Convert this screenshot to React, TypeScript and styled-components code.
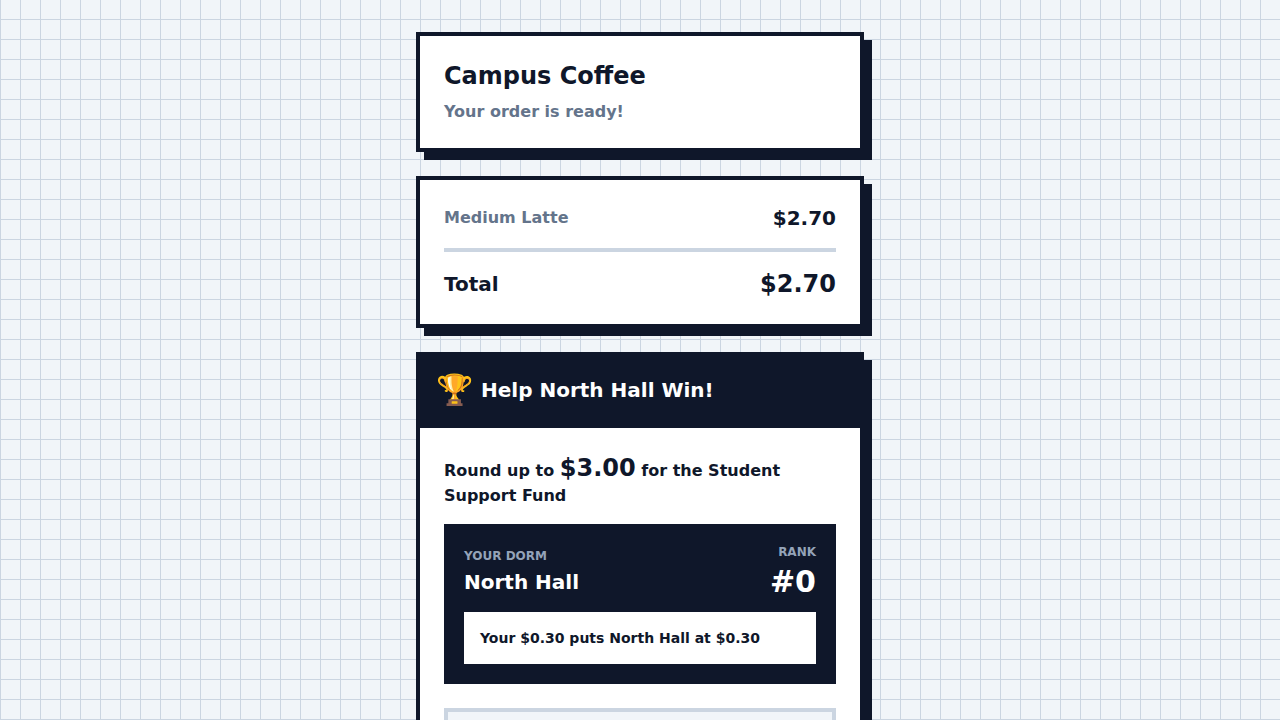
import React, { FC } from 'react'
import styled, { createGlobalStyle, css } from 'styled-components'

const GlobalStyle = createGlobalStyle`
    *, *::before, *::after {
        box-sizing: border-box;
    }

    body {
        margin: 0;
        color: #0f172a;
        font-family: "DejaVu Sans", sans-serif;
        font-size: 16px;
        line-height: 24px;
        background-color: #f1f5f9;
    }
`

const Page = styled.div`
    height: 100vh;
    overflow: hidden;
    padding: 32px 16px;
    background-color: #f1f5f9;
    background-image:
        linear-gradient(0deg, #cbd5e1 1px, transparent 1px),
        linear-gradient(90deg, #cbd5e1 1px, transparent 1px);
    background-size: 20px 20px;
`

const Column = styled.main`
    display: flex;
    flex-direction: column;
    gap: 24px;
    width: 448px;
    margin: 0 auto;
`

const Card = styled.section<{ $flush?: boolean }>`
    padding: 24px;
    border: 4px solid #0f172a;
    background-color: #fff;
    box-shadow: 8px 8px 0 0 #0f172a;
    ${(p) => p.$flush && css`
        padding: 0;
    `}
`

const Title = styled.h1`
    margin: 0 0 8px;
    font-size: 24px;
    font-weight: 700;
    line-height: 32px;
`

const Subtitle = styled.p`
    margin: 0;
    font-weight: 700;
    color: #64748b;
`

const Row = styled.div`
    display: flex;
    align-items: center;
    justify-content: space-between;
`

const TotalRow = styled(Row)`
    margin-top: 16px;
    padding-top: 16px;
    border-top: 4px solid #cbd5e1;
`

const Label = styled.span<{ $total?: boolean }>`
    font-weight: 700;
    color: #64748b;
    ${(p) => p.$total && css`
        font-size: 20px;
        line-height: 28px;
        color: #0f172a;
    `}
`

const Price = styled.span<{ $large?: boolean }>`
    font-size: ${(p) => (p.$large ? '24px' : '20px')};
    line-height: ${(p) => (p.$large ? '32px' : '28px')};
    font-weight: 700;
`

const Banner = styled.header`
    display: flex;
    align-items: center;
    gap: 8px;
    padding: 16px;
    border-bottom: 4px solid #0f172a;
    background-color: #0f172a;
    color: #fff;
`

const Trophy = styled.span`
    font-size: 30px;
    line-height: 36px;
`

const BannerTitle = styled.h2`
    margin: 0;
    font-size: 20px;
    font-weight: 700;
    line-height: 28px;
`

const Content = styled.div`
    padding: 24px;
`

const Pitch = styled.p`
    margin: 0 0 16px;
    font-weight: 700;
`

const Panel = styled.div`
    padding: 16px;
    border: 4px solid #0f172a;
    background-color: #0f172a;
    color: #fff;
`

const Stat = styled.div<{ $right?: boolean }>`
    text-align: ${(p) => (p.$right ? 'right' : 'left')};
`

const StatLabel = styled.div`
    margin-bottom: 4px;
    font-size: 12px;
    font-weight: 700;
    line-height: 16px;
    color: #94a3b8;
    text-transform: uppercase;
`

const StatValue = styled.div<{ $large?: boolean }>`
    font-size: ${(p) => (p.$large ? '30px' : '20px')};
    line-height: ${(p) => (p.$large ? '36px' : '28px')};
    font-weight: 700;
`

const Note = styled.p`
    margin: 12px 0 0;
    padding: 16px;
    background-color: #fff;
    color: #0f172a;
    font-size: 14px;
    font-weight: 700;
    line-height: 20px;
`

const NextPanel = styled.div`
    height: 120px;
    margin-top: 24px;
    border: 4px solid #cbd5e1;
    background-color: #f1f5f9;
`

const OrderSummary: FC = () => (
    <Card>
        <Row>
            <Label>Medium Latte</Label>
            <Price>$2.70</Price>
        </Row>
        <TotalRow>
            <Label $total>Total</Label>
            <Price $large>$2.70</Price>
        </TotalRow>
    </Card>
)

const RoundUp: FC = () => (
    <Card $flush>
        <Banner>
            <Trophy>🏆</Trophy>
            <BannerTitle>Help North Hall Win!</BannerTitle>
        </Banner>
        <Content>
            <Pitch>
                Round up to <Price $large>$3.00</Price> for the Student Support Fund
            </Pitch>
            <Panel>
                <Row>
                    <Stat>
                        <StatLabel>Your dorm</StatLabel>
                        <StatValue>North Hall</StatValue>
                    </Stat>
                    <Stat $right>
                        <StatLabel>Rank</StatLabel>
                        <StatValue $large>#0</StatValue>
                    </Stat>
                </Row>
                <Note>Your $0.30 puts North Hall at $0.30</Note>
            </Panel>
            <NextPanel />
        </Content>
    </Card>
)

const App: FC = () => (
    <>
        <GlobalStyle />
        <Page>
            <Column>
                <Card>
                    <Title>Campus Coffee</Title>
                    <Subtitle>Your order is ready!</Subtitle>
                </Card>
                <OrderSummary />
                <RoundUp />
            </Column>
        </Page>
    </>
)

export default App
